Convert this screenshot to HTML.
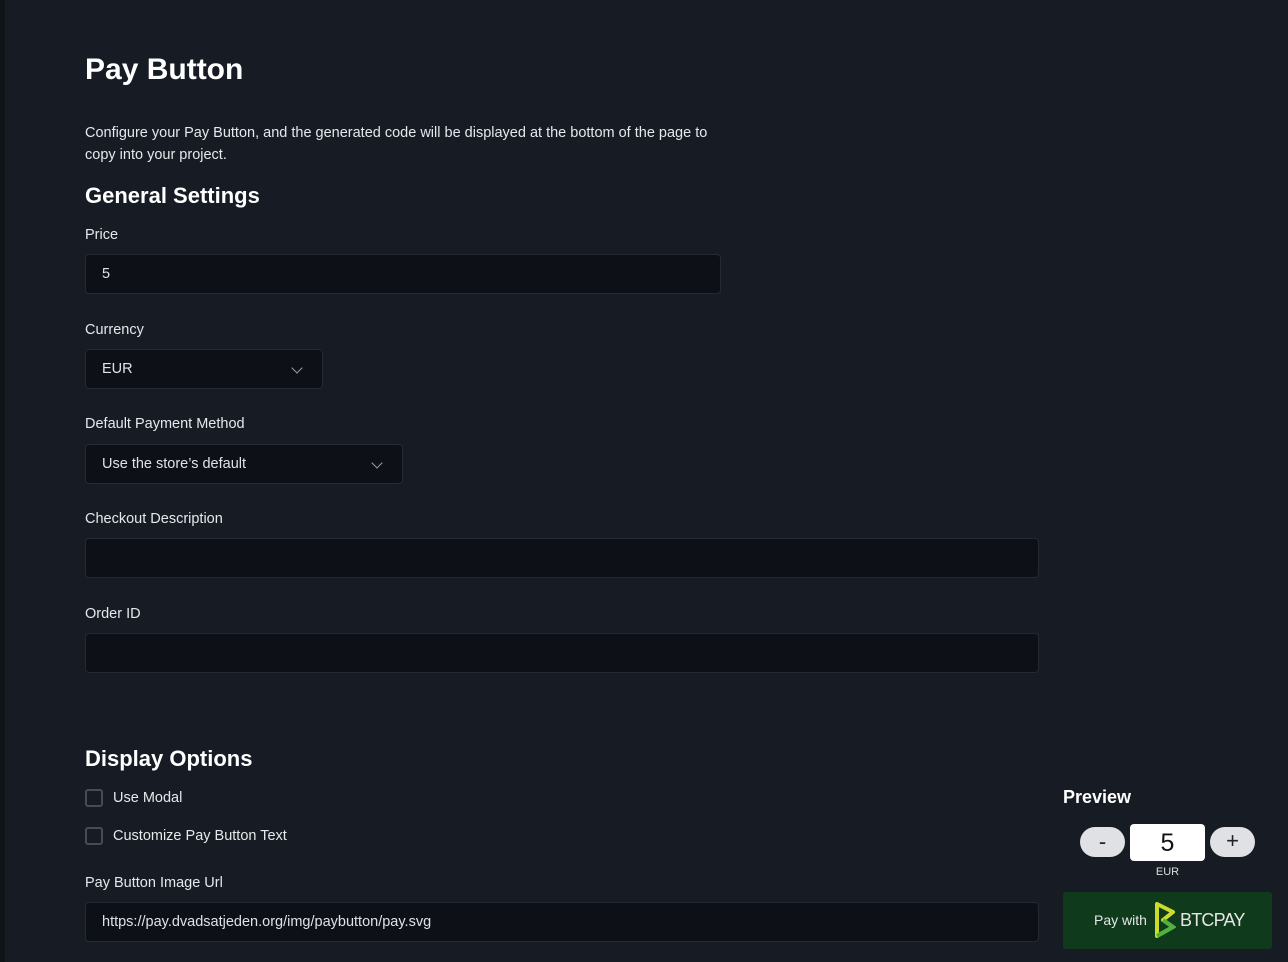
<!DOCTYPE html>
<html><head><style>
*{box-sizing:border-box;margin:0;padding:0}
body{width:1288px;height:962px;overflow:hidden;background:#161b24;color:#e6e8eb;font-family:"Liberation Sans","DejaVu Sans",sans-serif;position:relative}
.strip{position:absolute;left:0;top:0;width:5px;height:962px;background:#101318}
.a{position:absolute}
h1{position:absolute;left:85px;top:53px;font-size:30px;font-weight:bold;color:#fff}
h2{position:absolute;left:85px;font-size:22px;font-weight:bold;color:#fff}
.lbl{position:absolute;left:85px;font-size:14.5px;color:#e6e8eb}
.inp{position:absolute;left:85px;height:40px;background:#0d1117;border:1px solid #232a33;border-radius:4px;font-size:14.5px;color:#dfe2e6;padding:11px 16px;line-height:16px}
.chev{position:absolute;top:14px;width:8px;height:8px;border-right:1.5px solid #9aa1a9;border-bottom:1.5px solid #9aa1a9;transform:rotate(45deg)}
.cb{position:absolute;left:85px;width:18px;height:18px;border:2px solid #454c55;border-radius:3px}
.cbl{position:absolute;left:113px;font-size:14.5px}
</style></head><body>
<div class="strip"></div>
<h1>Pay Button</h1>
<div class="a" style="left:85px;top:122px;font-size:14.5px;line-height:22px;width:640px">Configure your Pay Button, and the generated code will be displayed at the bottom of the page to copy into your project.</div>
<h2 style="top:183px">General Settings</h2>
<div class="lbl" style="top:227px">Price</div>
<div class="inp" style="top:254px;width:636px">5</div>
<div class="lbl" style="top:322px">Currency</div>
<div class="inp" style="top:349px;width:238px">EUR<span class="chev" style="left:207px"></span></div>
<div class="lbl" style="top:416px">Default Payment Method</div>
<div class="inp" style="top:444px;width:318px">Use the store’s default<span class="chev" style="left:287px"></span></div>
<div class="lbl" style="top:511px">Checkout Description</div>
<div class="inp" style="top:538px;width:954px"></div>
<div class="lbl" style="top:606px">Order ID</div>
<div class="inp" style="top:633px;width:954px"></div>
<h2 style="top:746px">Display Options</h2>
<div class="cb" style="top:789px"></div><div class="cbl" style="top:790px">Use Modal</div>
<div class="cb" style="top:827px"></div><div class="cbl" style="top:828px">Customize Pay Button Text</div>
<div class="lbl" style="top:875px">Pay Button Image Url</div>
<div class="inp" style="top:902px;width:954px">https://pay.dvadsatjeden.org/img/paybutton/pay.svg</div>
<div class="a" style="left:1063px;top:787px;font-size:18px;font-weight:bold;color:#fff">Preview</div>
<div class="a" style="left:1080px;top:827px;width:45px;height:30px;border-radius:15px;background:#dfe1e4;color:#222;font-size:22px;text-align:center;line-height:30px">-</div>
<div class="a" style="left:1130px;top:824px;width:75px;height:37px;border-radius:4px;background:#fff;color:#111;font-size:25px;text-align:center;line-height:38px">5</div>
<div class="a" style="left:1210px;top:827px;width:45px;height:30px;border-radius:15px;background:#dfe1e4;color:#222;font-size:22px;text-align:center;line-height:28px">+</div>
<div class="a" style="left:1130px;top:866px;width:75px;text-align:center;font-size:11px;color:#ddd">EUR</div>
<div class="a" style="left:1063px;top:892px;width:209px;height:57px;background:#0f3b1c;border-radius:3px">
<span class="a" style="left:31px;top:20px;font-size:14px;color:#e6e6e6">Pay with</span>
<svg class="a" style="left:91px;top:10px" width="22" height="36" viewBox="0 0 22 36"><path d="M3 2 L3 34 L19 25 L9 18 L19 10 Z" fill="none" stroke="#cddc2a" stroke-width="4" stroke-linejoin="round"/><path d="M9 18 L19 25 L3 34" fill="none" stroke="#51b13e" stroke-width="4"/></svg>
<span class="a" style="left:117px;top:18px;font-size:18px;color:#e6e6e6;letter-spacing:-0.8px">BTCPAY</span>
</div>
</body></html>
